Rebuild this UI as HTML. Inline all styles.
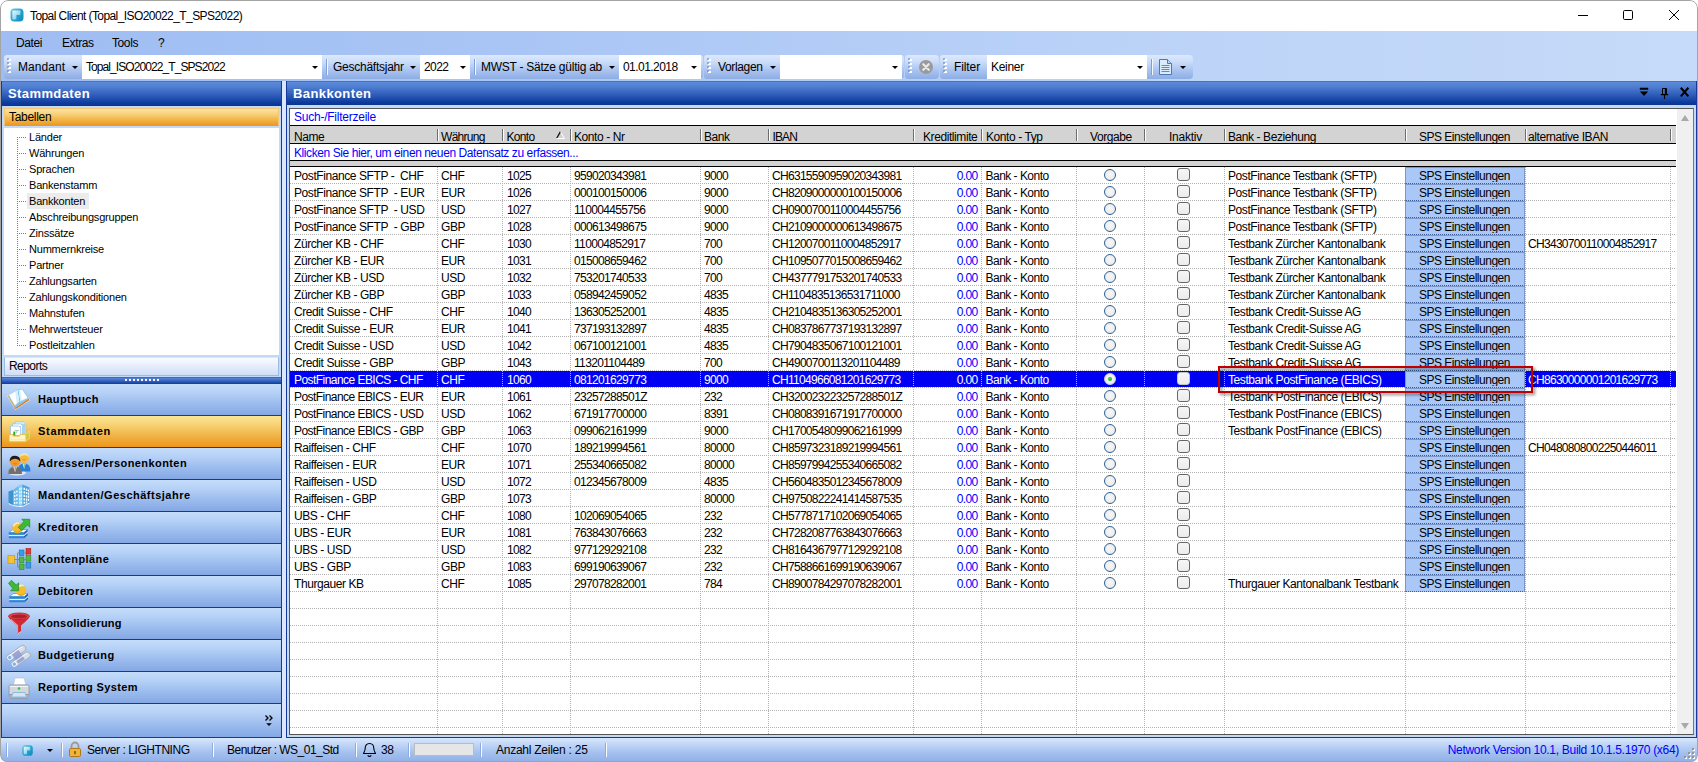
<!DOCTYPE html>
<html><head><meta charset="utf-8"><title>Topal Client</title>
<style>
*{box-sizing:border-box;margin:0;padding:0}
html,body{width:1698px;height:762px;overflow:hidden;background:#fff}
body{font-family:"Liberation Sans",sans-serif;font-size:12px;color:#000;position:relative}
.abs,#win *{position:absolute}
#win{position:absolute;left:0;top:0;width:1698px;height:762px;border-radius:8px 8px 7px 7px;overflow:hidden;background:#fff}
#frame{left:0;top:0;width:1698px;height:762px;border:1px solid #a4a4a4;border-radius:8px 8px 7px 7px;z-index:50;pointer-events:none}
/* title */
#title{left:1px;top:1px;width:1696px;height:30px;background:#fff}
#ttext{left:29px;top:7px;font-size:12px;letter-spacing:-0.58px;white-space:nowrap;line-height:16px}
/* menu + toolbar bg */
#mbar{left:1px;top:31px;width:1696px;height:50px;background:linear-gradient(90deg,#9fbdf3 0%,#a9c5f5 30%,#bdd4f8 70%,#c6daf9 100%)}
.mi{top:4px;font-size:12px;line-height:16px;letter-spacing:-0.4px;white-space:nowrap}
/* toolstrips */
.ts{top:24px;height:24px;border-radius:3px 4px 4px 3px;background:linear-gradient(180deg,#dde9fc 0%,#c9dcf9 30%,#a9c3f0 65%,#8eade3 100%)}
.grip{top:4px;left:4px;width:3px;height:15px;background:repeating-linear-gradient(180deg,#fff 0,#fff 2px,transparent 2px,transparent 4px)}
.grip:after{content:"";position:absolute;left:-1px;top:-1px;width:2px;height:15px;background:repeating-linear-gradient(180deg,#5a7fc4 0,#5a7fc4 2px,transparent 2px,transparent 4px);opacity:.55}
.tl{top:4px;font-size:12px;line-height:16px;letter-spacing:-0.25px;white-space:nowrap;color:#000}
.cb{top:0;height:24px;background:#fff}
.cb span{left:4px;top:4px;font-size:12px;line-height:16px;letter-spacing:-0.55px;white-space:nowrap}
.arr{width:0;height:0;border-left:3px solid transparent;border-right:3px solid transparent;border-top:3px solid #000;top:11px}
.tsep{top:4px;width:2px;height:16px;border-left:1px solid #7f9fd6;border-right:1px solid #f4f8fe}
/* panels */
.phead{height:25px;background:linear-gradient(180deg,#2f58b5 0,#5d8bdb 1px,#4f7dd0 25%,#2c5ab8 60%,#0e3c9c 88%,#0a3391 100%)}
.phead b{left:6px;top:5px;font-size:13px;line-height:16px;color:#fff;font-weight:bold;white-space:nowrap;letter-spacing:0.4px}
#lp{left:1px;top:81px;width:281px;height:657px;background:#c3d9f8;border-left:1px solid #16389a;border-right:1px solid #16389a;border-bottom:1px solid #16389a}
#tab{left:2px;top:27px;width:275px;height:18px;background:linear-gradient(180deg,#fbe3a3 0%,#f8cf74 35%,#f2ae3c 75%,#ec9a23 100%);border:1px solid #f5c676;border-bottom-color:#e99a2e}
#tab span,#rep span{left:4px;top:1px;font-size:12px;letter-spacing:-0.3px;line-height:15px;white-space:nowrap}
#tree{left:2px;top:47px;width:275px;height:227px;background:#fff}
.ti{left:0;height:16px;width:275px}
.ti span{left:23px;top:0;height:16px;padding:0 2px;font-size:11px;line-height:16px;letter-spacing:-0.2px;white-space:nowrap}
.ti.cur span{background:#ececec;padding-right:4px}
.ti:before{content:"";position:absolute;left:13px;top:8px;width:9px;height:1px;background:repeating-linear-gradient(90deg,#808080 0,#808080 1px,transparent 1px,transparent 2px)}
#tvl{left:13px;top:9px;width:1px;height:208px;background:repeating-linear-gradient(180deg,#808080 0,#808080 1px,transparent 1px,transparent 2px)}
#rep{left:2px;top:276px;width:275px;height:19px;background:linear-gradient(180deg,#fafcff 0%,#e6eefb 45%,#cfdef6 100%);border:1px solid #9db9e8;border-top-color:#d8e5fa}
#split{left:0;top:296px;width:279px;height:7px;background:linear-gradient(180deg,#2d59b6 0%,#5582d4 20%,#3a68c2 50%,#0e3b9b 100%)}
#split i{left:123px;top:2px;width:36px;height:2px;background:repeating-linear-gradient(90deg,#fff 0,#fff 2px,transparent 2px,transparent 4px);opacity:.95}
.nb{left:0;width:279px;height:32px;border-bottom:1px solid #16389a;background:linear-gradient(180deg,#c4dcfb 0%,#b5d0f6 30%,#9abbee 65%,#84a8e5 100%)}
.nb.act{background:linear-gradient(180deg,#fbe596 0%,#f7d172 30%,#f0ae3e 70%,#ee961b 100%)}
.nb span{left:36px;top:8px;font-size:11px;font-weight:bold;line-height:15px;letter-spacing:0.38px;white-space:nowrap}
.nb .ni{left:4px;top:3px}
#nbot{left:0;top:623px;width:279px;height:33px;background:linear-gradient(180deg,#c4dcfb 0%,#b5d0f6 30%,#9abbee 65%,#84a8e5 100%)}
#rp{left:286px;top:81px;width:1411px;height:657px;background:#c3d9f8;border-left:1px solid #16389a;border-right:1px solid #16389a;border-bottom:1px solid #16389a}
/* grid */
#grid{left:289px;top:108px;width:1405px;height:627px;background:#fff;border:1px solid #555;border-right-color:#777;overflow:hidden}
#g{left:0;top:0;width:1403px;height:625px}
.bl{left:0;width:1386px;height:1px;background:#000}
.gt{left:4px;font-size:12px;letter-spacing:-0.42px;line-height:16px;white-space:nowrap}
.blue{color:#0000ff}
#hdr{left:0;top:17px;width:1386px;height:17px;background:#d3d3d3}
.hs{top:20px;width:2px;height:12px;border-left:1px solid #6d6d6d;border-right:1px solid #fff}
.ht{top:3px;font-size:12px;letter-spacing:-0.42px;line-height:16px;white-space:nowrap}
#gray2{left:0;top:52px;width:1386px;height:5px;background:#d3d3d3}
.row{left:0;width:1386px;height:17px;background:linear-gradient(90deg,#b2b2b2 50%,transparent 50%) left bottom/2px 1px repeat-x}
.row .c{top:1px;font-size:12px;line-height:16px;letter-spacing:-0.42px;white-space:nowrap;height:16px}
.row .c.n{letter-spacing:-0.66px}
.row .c.i{letter-spacing:-0.70px}
.row .c.b{color:#0000ff}
.row.sel{background:linear-gradient(90deg,#b2b2b2 50%,#fff 50%) left bottom/2px 1px repeat-x,linear-gradient(#0000f5,#0000f5) left top/100% 16px no-repeat}
.row.sel .chk{border-color:#c4c4c4}
.row.sel .c{color:#fff}
.vl{z-index:1;top:58px;width:1px;height:567px;background:repeating-linear-gradient(180deg,#b2b2b2 0,#b2b2b2 1px,transparent 1px,transparent 2px)}
.rad{left:814px;top:2px;width:12px;height:12px;border-radius:50%;border:1.3px solid #2d6195;background:radial-gradient(circle at 50% 45%,#f7f7f7 0%,#efefef 55%,#e2e2e2 100%)}
.row.sel .rad{border-color:#c9d3e6}
.rad.on:after{content:"";position:absolute;left:2.7px;top:2.7px;width:4.4px;height:4.4px;border-radius:50%;background:radial-gradient(circle at 45% 40%,#4fd04a,#1f9a22)}
.chk{left:887px;top:1px;width:13px;height:13px;border-radius:3px;border:1px solid #666;background:linear-gradient(180deg,#f6f6f6,#ececec)}
.sps{left:1115px;top:0;width:120px;height:17px;background:#aac8f7;border:1px solid #7d97c9;border-bottom:1px dotted #3d5c96;overflow:hidden;z-index:3}
.sps span{left:13px;top:0px;font-size:12px;line-height:16px;height:14.4px;overflow:hidden;letter-spacing:-0.5px;white-space:nowrap}
.row.sel .sps span{color:#000}
#vsb{left:1387px;top:0;width:16px;height:625px;background:#f0f0f0}
.sa{left:4px;width:0;height:0;border-left:4px solid transparent;border-right:4px solid transparent}
/* red box */
#red{left:1218px;top:366px;width:315px;height:27px;border:2px solid #c00000;z-index:20;background:transparent;filter:drop-shadow(2px 2px 1.5px rgba(0,0,0,.5))}
/* status */
#sb{left:1px;top:738px;width:1696px;height:24px;background:linear-gradient(180deg,#d9e7fb 0%,#c2d7f7 25%,#a5c1ef 60%,#8fafe5 100%)}
.st{top:4px;font-size:12px;line-height:16px;letter-spacing:-0.45px;white-space:nowrap}
.ss{top:5px;width:2px;height:14px;border-left:1px solid #8eabde;border-right:1px solid #fafcff}
</style></head><body>
<div id="win">
 <div id="title">
  <svg style="left:8px;top:6px" width="16" height="16" viewBox="0 0 16 16"><defs><linearGradient id="tg" x1="0" y1="0" x2="1" y2="1"><stop offset="0" stop-color="#6fcbe6"/><stop offset=".5" stop-color="#23a3cf"/><stop offset="1" stop-color="#118bbd"/></linearGradient><linearGradient id="th" x1="0" y1="0" x2="1" y2="1"><stop offset="0" stop-color="#fff" stop-opacity=".9"/><stop offset=".55" stop-color="#d8f2fb" stop-opacity=".7"/><stop offset="1" stop-color="#9adcf1" stop-opacity=".35"/></linearGradient><filter id="tb" x="-20%" y="-20%" width="140%" height="140%"><feGaussianBlur stdDeviation=".55"/></filter></defs><rect x="1.500" y="1.500" width="13" height="13" rx="3.800" fill="url(#tg)"/><path d="M3.400 3.400h8v4.600H7.400v4.600H3.400z" fill="url(#th)" filter="url(#tb)"/></svg>
  <div id="ttext">Topal Client (Topal_ISO20022_T_SPS2022)</div>
  <svg style="left:1576px;top:8px" width="106" height="16" viewBox="0 0 106 16" fill="none" stroke="#000" stroke-width="1"><path d="M1 6.5h10"/><rect x="46.5" y="1.5" width="9" height="9" rx="1.2"/><path d="M92 1l10 10M102 1l-10 10"/></svg>
 </div>
 <div id="mbar">
  <div class="mi" style="left:15px">Datei</div><div class="mi" style="left:61px">Extras</div><div class="mi" style="left:111px">Tools</div><div class="mi" style="left:157px">?</div>
  <!-- strip 1 -->
  <div class="ts" style="left:3px;width:699px">
   <div class="grip"></div>
   <div class="tl" style="left:14px;letter-spacing:0.05px">Mandant</div><i class="arr" style="left:68px"></i>
   <div class="cb" style="left:78px;width:240px"><span style="letter-spacing:-0.92px">Topal_ISO20022_T_SPS2022</span><i class="arr" style="left:230px"></i></div>
   <i class="tsep" style="left:322px"></i>
   <div class="tl" style="left:329px">Geschäftsjahr</div><i class="arr" style="left:406px"></i>
   <div class="cb" style="left:416px;width:50px"><span>2022</span><i class="arr" style="left:40px"></i></div>
   <i class="tsep" style="left:470px"></i>
   <div class="tl" style="left:477px">MWST - Sätze gültig ab</div><i class="arr" style="left:605px"></i>
   <div class="cb" style="left:615px;width:82px"><span>01.01.2018</span><i class="arr" style="left:72px"></i></div>
  </div>
  <!-- strip 2 -->
  <div class="ts" style="left:703px;width:200px">
   <div class="grip"></div>
   <div class="tl" style="left:14px;letter-spacing:-0.35px">Vorlagen</div><i class="arr" style="left:66px"></i>
   <div class="cb" style="left:76px;width:122px"><i class="arr" style="left:112px"></i></div>
  </div>
  <!-- strip 3 -->
  <div class="ts" style="left:904px;width:34px">
   <div class="grip"></div>
   <svg style="left:13px;top:4px" width="16" height="16" viewBox="0 0 16 16"><circle cx="8" cy="8" r="7" fill="#9a9a9a"/><path d="M5.3 5.3l5.4 5.4M10.7 5.3l-5.4 5.4" stroke="#e9e9e9" stroke-width="2.3" stroke-linecap="round"/></svg>
  </div>
  <!-- strip 4 -->
  <div class="ts" style="left:939px;width:253px">
   <div class="grip"></div>
   <div class="tl" style="left:14px;letter-spacing:-0.1px">Filter</div>
   <div class="cb" style="left:47px;width:160px"><span style="letter-spacing:-0.3px">Keiner</span><i class="arr" style="left:150px"></i></div>
   <i class="tsep" style="left:211px"></i>
   <svg style="left:218px;top:3px" width="16" height="18" viewBox="0 0 16 18"><path d="M1.5 1.5h8l4 4v11h-12z" fill="#dcebfb" stroke="#4a78b8"/><path d="M9.5 1.5v4h4" fill="#b9d3f2" stroke="#4a78b8"/><path d="M3.5 7.5h8M3.5 9.5h8M3.5 11.5h8M3.5 13.5h8" stroke="#5b8cc9"/></svg>
   <i class="arr" style="left:240px"></i>
  </div>
 </div>

 <!-- left panel -->
 <div id="lp">
  <div class="phead" style="left:0;top:0;width:279px"><b>Stammdaten</b></div>
  <div id="tab"><span>Tabellen</span></div>
  <div id="tree"><div id="tvl"></div>
<div class="ti" style="top:1px"><span>Länder</span></div>
<div class="ti" style="top:17px"><span>Währungen</span></div>
<div class="ti" style="top:33px"><span>Sprachen</span></div>
<div class="ti" style="top:49px"><span>Bankenstamm</span></div>
<div class="ti cur" style="top:65px"><span>Bankkonten</span></div>
<div class="ti" style="top:81px"><span>Abschreibungsgruppen</span></div>
<div class="ti" style="top:97px"><span>Zinssätze</span></div>
<div class="ti" style="top:113px"><span>Nummernkreise</span></div>
<div class="ti" style="top:129px"><span>Partner</span></div>
<div class="ti" style="top:145px"><span>Zahlungsarten</span></div>
<div class="ti" style="top:161px"><span>Zahlungskonditionen</span></div>
<div class="ti" style="top:177px"><span>Mahnstufen</span></div>
<div class="ti" style="top:193px"><span>Mehrwertsteuer</span></div>
<div class="ti" style="top:209px"><span>Postleitzahlen</span></div>
  </div>
  <div id="rep"><span style="letter-spacing:-0.55px">Reports</span></div>
  <div id="split"><i></i></div>
<div class="nb" style="top:303px"><svg class="ni" width="26" height="26" viewBox="0 0 26 26"><path d="M1.300 9.200L9.400 23L23.800 13.200L22.800 10.500L9.600 19.800L2.200 7.600z" fill="#fff" opacity=".75"/><path d="M1.900 9.300L9.400 22.300L23.200 13L22.700 11.200L9.600 20.200L2.300 8.200z" fill="#e2962c"/><path d="M9.400 22.300L23.200 13L22.900 12.200L9.500 21.300z" fill="#c9452a" opacity=".55"/><path d="M2.300 7.900L11.800 2.800L16.700 1.900L22.600 11.300L9.500 20.600z" fill="#79c6ec"/><path d="M2.900 7.900L11.500 3.300L13.200 14.400L8.900 18.600z" fill="#fff"/><path d="M12.700 3.200L16.300 2.600L21.700 11L14.400 14.400z" fill="#fff"/><path d="M11.500 3.300L13.200 14.400L10.800 16.600L9.200 5z" fill="#d4ecf9" opacity=".9"/><path d="M12.700 3.200L14.400 14.400L16 13.600L14.200 3z" fill="#d4ecf9" opacity=".9"/><path d="M8.900 18.600L13.200 14.400L14.400 14.400L21.700 11" fill="none" stroke="#a9dbf3" stroke-width=".8"/></svg><span style="letter-spacing:0.38px">Hauptbuch</span></div>
<div class="nb act" style="top:335px"><svg class="ni" width="26" height="26" viewBox="0 0 26 26"><path d="M9 2.800h8.200l2.600 2.200v10.500H9z" fill="#eaf5fd" stroke="#86c0e8" stroke-width=".7"/><path d="M16 4.500v10.500M18 5v10" stroke="#74bbea" stroke-width="1.100"/><path d="M6.600 4.900h8l2 1.800v9H6.600z" fill="#fff" stroke="#86c0e8" stroke-width=".7"/><path d="M14.300 7v8.500" stroke="#9bd0f0" stroke-width="1"/><path d="M4.500 7h8.400l1.800 1.800v7.700H4.500z" fill="#fff" stroke="#86c0e8" stroke-width=".7"/><path d="M8.500 11.500h4.500M10.700 11.500v3" stroke="#9db7b0" stroke-width=".8" fill="none"/><rect x="7.300" y="12.600" width="2" height="4" fill="#2da52f"/><path d="M19.900 15.400L23.200 12.100v7.200L19.600 23z" fill="#d3c535" stroke="#fff" stroke-width=".4"/><path d="M3.100 15.400h3.400l.9 1.700h6l.9-1.700h5.600v7.400H3.100z" fill="#fdf5c8" stroke="#e6bd30" stroke-width=".9"/><path d="M3.600 20.800h15.800" stroke="#fbe9a0" stroke-width="1.200"/></svg><span style="letter-spacing:0.7px">Stammdaten</span></div>
<div class="nb" style="top:367px"><svg class="ni" width="26" height="26" viewBox="0 0 26 26"><ellipse cx="11" cy="21.800" rx="9" ry="2.800" fill="#fff" opacity=".7"/><circle cx="18" cy="7.300" r="5" fill="#f6b93c"/><path d="M13.200 6.800q.2-5 4.900-4.900q4.800.2 4.800 4.800q-1.500-2.600-4.700-2.400q-3.300.1-5 2.500z" fill="#efe3b0"/><path d="M16.500 8.600q1.500 1.300 3.200 0" fill="none" stroke="#c9771a" stroke-width=".6"/><path d="M11.800 20.500q0-8 6.400-8t6.300 8z" fill="#2b7fd2"/><path d="M16.600 12.800l1.600 5l1.500-5z" fill="#eef6fc"/><path d="M17.700 13.300l.5 4l.5-4z" fill="#23a35a"/><circle cx="9" cy="10.800" r="5" fill="#f39a2a"/><path d="M3.700 10.500q-.3-5.700 5.300-5.700q5.500.1 5.300 5.700q-1.800-3-5.300-2.800q-3.500-.1-5.300 2.800z" fill="#1a1a1a"/><path d="M7.500 12.500q1.500 1.200 3.100 0" fill="none" stroke="#b85f10" stroke-width=".6"/><path d="M2 23q0-7.500 7-7.500t7 7.500z" fill="#707070"/><path d="M2 23q0-7.500 7-7.500" fill="none" stroke="#a4a4a4" stroke-width=".8"/><path d="M7.300 15.700l1.800 5.500l1.700-5.500z" fill="#f4f4f4"/><path d="M8.600 16.200l.5 4.600l.6-4.600z" fill="#d81e1e"/></svg><span style="letter-spacing:0.42px">Adressen/Personenkonten</span></div>
<div class="nb" style="top:399px"><svg class="ni" width="26" height="26" viewBox="0 0 26 26"><path d="M2.500 8.500l4.500-1.500v15.500l-4.500-2z" fill="#3c94d0"/><path d="M7 7l5.500-4v20.500l-5.500-1z" fill="#6cb9e8"/><path d="M12.500 3l4-1.500l7 3v15.500l-7 3.500h-4z" fill="#46a3df"/><path d="M12.500 3l4-1.500v22l-4 0z" fill="#8ed0f3"/><g fill="#f2faff"><path d="M13.300 5h1v2.200h-1zM14.800 4.500h1v2.200h-1zM13.300 8.400h1v2.200h-1zM14.800 8h1v2.200h-1zM13.300 11.800h1v2.200h-1zM14.800 11.500h1v2.200h-1zM13.300 15.200h1v2.200h-1zM14.800 15h1v2.200h-1zM13.300 18.600h1v2.200h-1zM14.800 18.500h1v2.200h-1z"/><path d="M17.500 4.800h1.500v2.200h-1.500zM19.800 5.600h1.400v2.200h-1.400zM21.800 6.400h1.200v2.200h-1.200zM17.500 8.300h1.500v2.200h-1.500zM19.800 8.900h1.400v2.200h-1.400zM21.800 9.500h1.200v2.200h-1.200zM17.500 11.800h1.500v2.200h-1.500zM19.800 12.200h1.400v2.200h-1.400zM21.800 12.600h1.200v2.200h-1.200zM17.500 15.300h1.500v2.200h-1.500zM19.800 15.500h1.400v2.200h-1.400zM21.800 15.700h1.200v2.200h-1.200zM17.500 18.800h1.500v2h-1.500zM19.800 18.500h1.400v2h-1.400z"/><path d="M8 8.500h1.400v2H8zM10.200 7.500h1.400v2h-1.400zM8 12h1.400v2H8zM10.200 11.300h1.400v2h-1.400zM8 15.500h1.400v2H8zM10.200 15h1.400v2h-1.400zM8 19h1.400v2H8zM10.200 18.700h1.400v2h-1.400z"/></g><path d="M2.500 20.500l4.500 2l5.500 1h4l7-3.500" fill="none" stroke="#fff" stroke-width="1" opacity=".8"/></svg><span style="letter-spacing:0.5px">Mandanten/Geschäftsjahre</span></div>
<div class="nb" style="top:431px"><svg class="ni" width="26" height="26" viewBox="0 0 26 26"><path d="M2.800 17.500l4.200-3h14.500l-3.500 3z" fill="#fff" stroke="#3f92d6" stroke-width=".7"/><path d="M2.800 17.500h15.200v2.200H2.800z" fill="#2a87d6"/><path d="M18 17.500l3.500-3v2.200l-3.500 3z" fill="#1b69b4"/><path d="M2.800 20.200h15.200l3.500-3v.800l-3.500 3H2.800z" fill="#fff"/><path d="M2.800 21.200h15.200v2H2.800z" fill="#2a87d6"/><path d="M18 21.200l3.500-3v2l-3.500 3z" fill="#1b69b4"/><circle cx="11.500" cy="13" r="5.300" fill="#f5bd2e"/><path d="M7.600 11.200a4.800 4.800 0 0 1 5.500-3" fill="none" stroke="#fdeeb0" stroke-width="1.600"/><path d="M8.500 16a5 5 0 0 0 7-1" fill="none" stroke="#dc9a14" stroke-width="1"/><path d="M12.300 12.300l5.700-5.700l-2.300-2.300h8v8l-2.300-2.300l-5.700 5.700z" fill="#3db838" stroke="#1e8a22" stroke-width=".7"/></svg><span style="letter-spacing:0.5px">Kreditoren</span></div>
<div class="nb" style="top:463px"><svg class="ni" width="26" height="26" viewBox="0 0 26 26"><rect x="2" y="8.500" width="6.500" height="8" fill="#f4c430" stroke="#c99a12" stroke-width=".7"/><path d="M8.500 12.500h3M11.500 6v14M11.500 6h2M11.500 12.500h2M11.500 20h2M18.500 6h2v12h-2M18.500 12.500h2" fill="none" stroke="#7a8aa8" stroke-width="1"/><rect x="13.200" y="3" width="4.800" height="5.600" fill="#3b9be3" stroke="#1f70b8" stroke-width=".6"/><rect x="13.200" y="10" width="4.800" height="5.600" fill="#52b947" stroke="#2c8a26" stroke-width=".6"/><rect x="13.200" y="17" width="4.800" height="5.600" fill="#52b947" stroke="#2c8a26" stroke-width=".6"/><rect x="20" y="1.500" width="4.800" height="5.600" fill="#e23a2e" stroke="#ab1f17" stroke-width=".6"/><rect x="20" y="8.500" width="4.800" height="5.600" fill="#52b947" stroke="#2c8a26" stroke-width=".6"/><rect x="20" y="15.500" width="4.800" height="5.600" fill="#3b9be3" stroke="#1f70b8" stroke-width=".6"/></svg><span style="letter-spacing:0.42px">Kontenpläne</span></div>
<div class="nb" style="top:495px"><svg class="ni" width="26" height="26" viewBox="0 0 26 26"><path d="M3.300 17.500l4.200-3h14.500l-3.500 3z" fill="#fff" stroke="#3f92d6" stroke-width=".7"/><path d="M3.300 17.500h15.200v2.200H3.300z" fill="#2a87d6"/><path d="M18.500 17.500l3.500-3v2.200l-3.500 3z" fill="#1b69b4"/><path d="M3.300 20.200h15.200l3.500-3v.800l-3.500 3H3.300z" fill="#fff"/><path d="M3.300 21.200h15.200v2H3.300z" fill="#2a87d6"/><path d="M18.500 21.200l3.500-3v2l-3.500 3z" fill="#1b69b4"/><circle cx="15" cy="11.500" r="5.300" fill="#f5bd2e"/><path d="M12 8.500a4.800 4.800 0 0 1 5.500-1.800" fill="none" stroke="#fdeeb0" stroke-width="1.600"/><path d="M11.500 14.500a5 5 0 0 0 7.500 0" fill="none" stroke="#dc9a14" stroke-width="1"/><path d="M2.500 4.300l3-3l4.800 4.800l2.300-2.300v8H4.600l2.300-2.300z" fill="#3db838" stroke="#1e8a22" stroke-width=".7"/></svg><span style="letter-spacing:0.45px">Debitoren</span></div>
<div class="nb" style="top:527px"><svg class="ni" width="26" height="26" viewBox="0 0 26 26"><path d="M2.500 5.500q1 3 8.500 9v8.800l4-2.800v-6q7.500-6 8.500-9q-10.500 4.500-21 0z" fill="#d42a36"/><ellipse cx="13" cy="5.300" rx="10.500" ry="3.300" fill="#e2474e" stroke="#b41e28" stroke-width=".8"/><ellipse cx="13" cy="5.400" rx="8" ry="2" fill="#ad1f2a"/><path d="M5 8.500q2.500 2.800 6.500 6v7.500" fill="none" stroke="#f39498" stroke-width="1.200"/><path d="M11 23.300l4-2.800" stroke="#fff" stroke-width=".8" opacity=".7"/></svg><span style="letter-spacing:0.22px">Konsolidierung</span></div>
<div class="nb" style="top:559px"><svg class="ni" width="26" height="26" viewBox="0 0 26 26"><g transform="rotate(-35 13 13)"><rect x="1.500" y="6" width="22" height="6" rx="3" fill="#d9dde6" stroke="#9aa3b5" stroke-width=".7"/><rect x="1.500" y="14" width="22" height="6" rx="3" fill="#d9dde6" stroke="#9aa3b5" stroke-width=".7"/><rect x="8" y="7" width="8" height="12" fill="#8f9bd0" opacity=".85"/><circle cx="4.500" cy="9" r="2.200" fill="#7fb4e8" stroke="#fff" stroke-width=".8"/><circle cx="4.500" cy="17" r="2.200" fill="#7fb4e8" stroke="#fff" stroke-width=".8"/><path d="M6 7.200h15M6 15.200h15" stroke="#fff" stroke-width="1" opacity=".8"/></g></svg><span style="letter-spacing:0.42px">Budgetierung</span></div>
<div class="nb" style="top:591px"><svg class="ni" width="26" height="26" viewBox="0 0 26 26"><path d="M7.500 10l1.500-7h9l2 7z" fill="#fff" stroke="#b9c4d4" stroke-width=".7"/><path d="M3 11.500q0-1.500 1.500-1.500h17q1.500 0 1.500 1.500v8h-20z" fill="#d4d7dc" stroke="#8e949e" stroke-width=".8"/><path d="M3 19.500h20l-1.500 4h-17z" fill="#b4b8c0" stroke="#8e949e" stroke-width=".7"/><path d="M7 17.500h12l1.500 4.500h-15z" fill="#cfe6f8" stroke="#7aaad2" stroke-width=".7"/><circle cx="13" cy="13.500" r="1.300" fill="#35c43c"/><path d="M4 11.500h18" stroke="#f4f5f7" stroke-width="1"/>
</svg><span style="letter-spacing:0.36px">Reporting System</span></div>
  <div id="nbot"><svg style="left:262px;top:10px" width="10" height="18" viewBox="0 0 10 18"><path d="M1.5 1.500l2.500 2.500l-2.500 2.500M5.500 1.500l2.500 2.500l-2.500 2.500" fill="none" stroke="#000" stroke-width="1.35"/><path d="M2.200 9.200h5.600l-2.800 2.800z" fill="#000"/></svg></div>
 </div>

 <div style="left:282px;top:81px;width:4px;height:657px;background:#d9e6fb"></div>
 <!-- right panel -->
 <div id="rp">
  <div class="phead" style="left:0;top:0;width:1409px;height:24px"><b>Bankkonten</b>
   <svg style="left:1350px;top:5px" width="56" height="16" viewBox="0 0 56 16"><path d="M2.800 1.800h8.400v1.900H2.800zM2.800 5.500h8.400l-4.200 4.600z" fill="#000"/><path d="M25.500 2.500h4v6h-4z" fill="none" stroke="#000" stroke-width="1"/><path d="M28.700 2.500v6" stroke="#000" stroke-width="1.600"/><path d="M23.800 8.600h7.400" stroke="#000" stroke-width="1.200"/><path d="M27.500 8.600v4.300" stroke="#000" stroke-width="1.100"/><path d="M43.800 1.800l7.600 8.600M51.400 1.800l-7.600 8.600" stroke="#000" stroke-width="2.100"/></svg>
  </div>
 </div>
 <div id="grid"><div id="g">
  <div class="gt blue" style="top:0;letter-spacing:-0.24px">Such-/Filterzeile</div>
  <div class="bl" style="top:16px"></div>
  <div id="hdr">
   <div class="ht" style="left:4px">Name</div><div class="ht" style="left:151px;letter-spacing:-0.7px">Währung</div><div class="ht" style="left:216.500px;letter-spacing:-0.7px">Konto</div>
   <svg style="left:266px;top:5px" width="10" height="8" viewBox="0 0 10 8"><path d="M0.700 7.300L4.500 0.600" stroke="#111" stroke-width="1.300" fill="none"/><path d="M4.500 0.500L8.500 7.500H0.500" stroke="#fff" fill="none"/></svg>
   <div class="ht" style="left:284px">Konto - Nr</div><div class="ht" style="left:414px">Bank</div><div class="ht" style="left:482.500px;letter-spacing:-0.9px">IBAN</div>
   <div class="ht" style="left:633px">Kreditlimite</div><div class="ht" style="left:696px">Konto - Typ</div><div class="ht" style="left:800px">Vorgabe</div>
   <div class="ht" style="left:879px;letter-spacing:-0.25px">Inaktiv</div><div class="ht" style="left:938px">Bank - Beziehung</div><div class="ht" style="left:1129px;letter-spacing:-0.5px">SPS Einstellungen</div><div class="ht" style="left:1238px">alternative IBAN</div>
  </div>
<div class="hs" style="left:147px"></div>
<div class="hs" style="left:212px"></div>
<div class="hs" style="left:280px"></div>
<div class="hs" style="left:410px"></div>
<div class="hs" style="left:478px"></div>
<div class="hs" style="left:623px"></div>
<div class="hs" style="left:691px"></div>
<div class="hs" style="left:786px"></div>
<div class="hs" style="left:854px"></div>
<div class="hs" style="left:934px"></div>
<div class="hs" style="left:1115px"></div>
<div class="hs" style="left:1235px"></div>
<div class="hs" style="left:1380px"></div>
  <div class="bl" style="top:34px"></div>
  <div class="gt blue" style="top:36px;letter-spacing:-0.41px">Klicken Sie hier, um einen neuen Datensatz zu erfassen...</div>
  <div class="bl" style="top:51px"></div>
  <div id="gray2"></div>
  <div class="bl" style="top:57px"></div>
  <div id="rows" style="left:0;top:0;width:1386px;height:625px">
<div class="row" style="top:58px"><span class="c" style="left:4px">PostFinance SFTP -&nbsp; CHF</span><span class="c" style="left:151px">CHF</span><span class="c n" style="left:217px">1025</span><span class="c n" style="left:284px">959020343981</span><span class="c n" style="left:414px">9000</span><span class="c i" style="left:482px">CH6315590959020343981</span><span class="c n b" style="right:698.5px">0.00</span><span class="c" style="left:695.5px;letter-spacing:-0.52px">Bank - Konto</span><i class="rad"></i><i class="chk"></i><span class="c" style="left:938px">PostFinance Testbank (SFTP)</span><span class="sps"><span>SPS Einstellungen</span></span><span class="c i" style="left:1238px"></span></div>
<div class="row" style="top:75px"><span class="c" style="left:4px">PostFinance SFTP&nbsp; - EUR</span><span class="c" style="left:151px">EUR</span><span class="c n" style="left:217px">1026</span><span class="c n" style="left:284px">000100150006</span><span class="c n" style="left:414px">9000</span><span class="c i" style="left:482px">CH8209000000100150006</span><span class="c n b" style="right:698.5px">0.00</span><span class="c" style="left:695.5px;letter-spacing:-0.52px">Bank - Konto</span><i class="rad"></i><i class="chk"></i><span class="c" style="left:938px">PostFinance Testbank (SFTP)</span><span class="sps"><span>SPS Einstellungen</span></span><span class="c i" style="left:1238px"></span></div>
<div class="row" style="top:92px"><span class="c" style="left:4px">PostFinance SFTP&nbsp; - USD</span><span class="c" style="left:151px">USD</span><span class="c n" style="left:217px">1027</span><span class="c n" style="left:284px">110004455756</span><span class="c n" style="left:414px">9000</span><span class="c i" style="left:482px">CH0900700110004455756</span><span class="c n b" style="right:698.5px">0.00</span><span class="c" style="left:695.5px;letter-spacing:-0.52px">Bank - Konto</span><i class="rad"></i><i class="chk"></i><span class="c" style="left:938px">PostFinance Testbank (SFTP)</span><span class="sps"><span>SPS Einstellungen</span></span><span class="c i" style="left:1238px"></span></div>
<div class="row" style="top:109px"><span class="c" style="left:4px">PostFinance SFTP&nbsp; - GBP</span><span class="c" style="left:151px">GBP</span><span class="c n" style="left:217px">1028</span><span class="c n" style="left:284px">000613498675</span><span class="c n" style="left:414px">9000</span><span class="c i" style="left:482px">CH2109000000613498675</span><span class="c n b" style="right:698.5px">0.00</span><span class="c" style="left:695.5px;letter-spacing:-0.52px">Bank - Konto</span><i class="rad"></i><i class="chk"></i><span class="c" style="left:938px">PostFinance Testbank (SFTP)</span><span class="sps"><span>SPS Einstellungen</span></span><span class="c i" style="left:1238px"></span></div>
<div class="row" style="top:126px"><span class="c" style="left:4px">Zürcher KB - CHF</span><span class="c" style="left:151px">CHF</span><span class="c n" style="left:217px">1030</span><span class="c n" style="left:284px">110004852917</span><span class="c n" style="left:414px">700</span><span class="c i" style="left:482px">CH1200700110004852917</span><span class="c n b" style="right:698.5px">0.00</span><span class="c" style="left:695.5px;letter-spacing:-0.52px">Bank - Konto</span><i class="rad"></i><i class="chk"></i><span class="c" style="left:938px">Testbank Zürcher Kantonalbank</span><span class="sps"><span>SPS Einstellungen</span></span><span class="c i" style="left:1238px">CH3430700110004852917</span></div>
<div class="row" style="top:143px"><span class="c" style="left:4px">Zürcher KB - EUR</span><span class="c" style="left:151px">EUR</span><span class="c n" style="left:217px">1031</span><span class="c n" style="left:284px">015008659462</span><span class="c n" style="left:414px">700</span><span class="c i" style="left:482px">CH1095077015008659462</span><span class="c n b" style="right:698.5px">0.00</span><span class="c" style="left:695.5px;letter-spacing:-0.52px">Bank - Konto</span><i class="rad"></i><i class="chk"></i><span class="c" style="left:938px">Testbank Zürcher Kantonalbank</span><span class="sps"><span>SPS Einstellungen</span></span><span class="c i" style="left:1238px"></span></div>
<div class="row" style="top:160px"><span class="c" style="left:4px">Zürcher KB - USD</span><span class="c" style="left:151px">USD</span><span class="c n" style="left:217px">1032</span><span class="c n" style="left:284px">753201740533</span><span class="c n" style="left:414px">700</span><span class="c i" style="left:482px">CH4377791753201740533</span><span class="c n b" style="right:698.5px">0.00</span><span class="c" style="left:695.5px;letter-spacing:-0.52px">Bank - Konto</span><i class="rad"></i><i class="chk"></i><span class="c" style="left:938px">Testbank Zürcher Kantonalbank</span><span class="sps"><span>SPS Einstellungen</span></span><span class="c i" style="left:1238px"></span></div>
<div class="row" style="top:177px"><span class="c" style="left:4px">Zürcher KB - GBP</span><span class="c" style="left:151px">GBP</span><span class="c n" style="left:217px">1033</span><span class="c n" style="left:284px">058942459052</span><span class="c n" style="left:414px">4835</span><span class="c i" style="left:482px">CH1104835136531711000</span><span class="c n b" style="right:698.5px">0.00</span><span class="c" style="left:695.5px;letter-spacing:-0.52px">Bank - Konto</span><i class="rad"></i><i class="chk"></i><span class="c" style="left:938px">Testbank Zürcher Kantonalbank</span><span class="sps"><span>SPS Einstellungen</span></span><span class="c i" style="left:1238px"></span></div>
<div class="row" style="top:194px"><span class="c" style="left:4px">Credit Suisse - CHF</span><span class="c" style="left:151px">CHF</span><span class="c n" style="left:217px">1040</span><span class="c n" style="left:284px">136305252001</span><span class="c n" style="left:414px">4835</span><span class="c i" style="left:482px">CH2104835136305252001</span><span class="c n b" style="right:698.5px">0.00</span><span class="c" style="left:695.5px;letter-spacing:-0.52px">Bank - Konto</span><i class="rad"></i><i class="chk"></i><span class="c" style="left:938px">Testbank Credit-Suisse AG</span><span class="sps"><span>SPS Einstellungen</span></span><span class="c i" style="left:1238px"></span></div>
<div class="row" style="top:211px"><span class="c" style="left:4px">Credit Suisse - EUR</span><span class="c" style="left:151px">EUR</span><span class="c n" style="left:217px">1041</span><span class="c n" style="left:284px">737193132897</span><span class="c n" style="left:414px">4835</span><span class="c i" style="left:482px">CH0837867737193132897</span><span class="c n b" style="right:698.5px">0.00</span><span class="c" style="left:695.5px;letter-spacing:-0.52px">Bank - Konto</span><i class="rad"></i><i class="chk"></i><span class="c" style="left:938px">Testbank Credit-Suisse AG</span><span class="sps"><span>SPS Einstellungen</span></span><span class="c i" style="left:1238px"></span></div>
<div class="row" style="top:228px"><span class="c" style="left:4px">Credit Suisse - USD</span><span class="c" style="left:151px">USD</span><span class="c n" style="left:217px">1042</span><span class="c n" style="left:284px">067100121001</span><span class="c n" style="left:414px">4835</span><span class="c i" style="left:482px">CH7904835067100121001</span><span class="c n b" style="right:698.5px">0.00</span><span class="c" style="left:695.5px;letter-spacing:-0.52px">Bank - Konto</span><i class="rad"></i><i class="chk"></i><span class="c" style="left:938px">Testbank Credit-Suisse AG</span><span class="sps"><span>SPS Einstellungen</span></span><span class="c i" style="left:1238px"></span></div>
<div class="row" style="top:245px"><span class="c" style="left:4px">Credit Suisse - GBP</span><span class="c" style="left:151px">GBP</span><span class="c n" style="left:217px">1043</span><span class="c n" style="left:284px">113201104489</span><span class="c n" style="left:414px">700</span><span class="c i" style="left:482px">CH4900700113201104489</span><span class="c n b" style="right:698.5px">0.00</span><span class="c" style="left:695.5px;letter-spacing:-0.52px">Bank - Konto</span><i class="rad"></i><i class="chk"></i><span class="c" style="left:938px">Testbank Credit-Suisse AG</span><span class="sps"><span>SPS Einstellungen</span></span><span class="c i" style="left:1238px"></span></div>
<div class="row sel" style="top:262px"><span class="c" style="left:4px;letter-spacing:-0.55px">PostFinance EBICS - CHF</span><span class="c" style="left:151px">CHF</span><span class="c n" style="left:217px">1060</span><span class="c n" style="left:284px">081201629773</span><span class="c n" style="left:414px">9000</span><span class="c i" style="left:482px">CH1104966081201629773</span><span class="c n b" style="right:698.5px">0.00</span><span class="c" style="left:695.5px;letter-spacing:-0.52px">Bank - Konto</span><i class="rad on"></i><i class="chk"></i><span class="c" style="left:938px">Testbank PostFinance (EBICS)</span><span class="sps"><span>SPS Einstellungen</span></span><span class="c i" style="left:1238px">CH8630000001201629773</span></div>
<div class="row" style="top:279px"><span class="c" style="left:4px;letter-spacing:-0.55px">PostFinance EBICS - EUR</span><span class="c" style="left:151px">EUR</span><span class="c n" style="left:217px">1061</span><span class="c n" style="left:284px">23257288501Z</span><span class="c n" style="left:414px">232</span><span class="c i" style="left:482px">CH320023223257288501Z</span><span class="c n b" style="right:698.5px">0.00</span><span class="c" style="left:695.5px;letter-spacing:-0.52px">Bank - Konto</span><i class="rad"></i><i class="chk"></i><span class="c" style="left:938px">Testbank PostFinance (EBICS)</span><span class="sps"><span>SPS Einstellungen</span></span><span class="c i" style="left:1238px"></span></div>
<div class="row" style="top:296px"><span class="c" style="left:4px;letter-spacing:-0.55px">PostFinance EBICS - USD</span><span class="c" style="left:151px">USD</span><span class="c n" style="left:217px">1062</span><span class="c n" style="left:284px">671917700000</span><span class="c n" style="left:414px">8391</span><span class="c i" style="left:482px">CH0808391671917700000</span><span class="c n b" style="right:698.5px">0.00</span><span class="c" style="left:695.5px;letter-spacing:-0.52px">Bank - Konto</span><i class="rad"></i><i class="chk"></i><span class="c" style="left:938px">Testbank PostFinance (EBICS)</span><span class="sps"><span>SPS Einstellungen</span></span><span class="c i" style="left:1238px"></span></div>
<div class="row" style="top:313px"><span class="c" style="left:4px;letter-spacing:-0.55px">PostFinance EBICS - GBP</span><span class="c" style="left:151px">GBP</span><span class="c n" style="left:217px">1063</span><span class="c n" style="left:284px">099062161999</span><span class="c n" style="left:414px">9000</span><span class="c i" style="left:482px">CH1700548099062161999</span><span class="c n b" style="right:698.5px">0.00</span><span class="c" style="left:695.5px;letter-spacing:-0.52px">Bank - Konto</span><i class="rad"></i><i class="chk"></i><span class="c" style="left:938px">Testbank PostFinance (EBICS)</span><span class="sps"><span>SPS Einstellungen</span></span><span class="c i" style="left:1238px"></span></div>
<div class="row" style="top:330px"><span class="c" style="left:4px">Raiffeisen - CHF</span><span class="c" style="left:151px">CHF</span><span class="c n" style="left:217px">1070</span><span class="c n" style="left:284px">189219994561</span><span class="c n" style="left:414px">80000</span><span class="c i" style="left:482px">CH8597323189219994561</span><span class="c n b" style="right:698.5px">0.00</span><span class="c" style="left:695.5px;letter-spacing:-0.52px">Bank - Konto</span><i class="rad"></i><i class="chk"></i><span class="c" style="left:938px"></span><span class="sps"><span>SPS Einstellungen</span></span><span class="c i" style="left:1238px">CH0480808002250446011</span></div>
<div class="row" style="top:347px"><span class="c" style="left:4px">Raiffeisen - EUR</span><span class="c" style="left:151px">EUR</span><span class="c n" style="left:217px">1071</span><span class="c n" style="left:284px">255340665082</span><span class="c n" style="left:414px">80000</span><span class="c i" style="left:482px">CH8597994255340665082</span><span class="c n b" style="right:698.5px">0.00</span><span class="c" style="left:695.5px;letter-spacing:-0.52px">Bank - Konto</span><i class="rad"></i><i class="chk"></i><span class="c" style="left:938px"></span><span class="sps"><span>SPS Einstellungen</span></span><span class="c i" style="left:1238px"></span></div>
<div class="row" style="top:364px"><span class="c" style="left:4px">Raiffeisen - USD</span><span class="c" style="left:151px">USD</span><span class="c n" style="left:217px">1072</span><span class="c n" style="left:284px">012345678009</span><span class="c n" style="left:414px">4835</span><span class="c i" style="left:482px">CH5604835012345678009</span><span class="c n b" style="right:698.5px">0.00</span><span class="c" style="left:695.5px;letter-spacing:-0.52px">Bank - Konto</span><i class="rad"></i><i class="chk"></i><span class="c" style="left:938px"></span><span class="sps"><span>SPS Einstellungen</span></span><span class="c i" style="left:1238px"></span></div>
<div class="row" style="top:381px"><span class="c" style="left:4px">Raiffeisen - GBP</span><span class="c" style="left:151px">GBP</span><span class="c n" style="left:217px">1073</span><span class="c n" style="left:284px"></span><span class="c n" style="left:414px">80000</span><span class="c i" style="left:482px">CH9750822241414587535</span><span class="c n b" style="right:698.5px">0.00</span><span class="c" style="left:695.5px;letter-spacing:-0.52px">Bank - Konto</span><i class="rad"></i><i class="chk"></i><span class="c" style="left:938px"></span><span class="sps"><span>SPS Einstellungen</span></span><span class="c i" style="left:1238px"></span></div>
<div class="row" style="top:398px"><span class="c" style="left:4px">UBS - CHF</span><span class="c" style="left:151px">CHF</span><span class="c n" style="left:217px">1080</span><span class="c n" style="left:284px">102069054065</span><span class="c n" style="left:414px">232</span><span class="c i" style="left:482px">CH5778717102069054065</span><span class="c n b" style="right:698.5px">0.00</span><span class="c" style="left:695.5px;letter-spacing:-0.52px">Bank - Konto</span><i class="rad"></i><i class="chk"></i><span class="c" style="left:938px"></span><span class="sps"><span>SPS Einstellungen</span></span><span class="c i" style="left:1238px"></span></div>
<div class="row" style="top:415px"><span class="c" style="left:4px">UBS - EUR</span><span class="c" style="left:151px">EUR</span><span class="c n" style="left:217px">1081</span><span class="c n" style="left:284px">763843076663</span><span class="c n" style="left:414px">232</span><span class="c i" style="left:482px">CH7282087763843076663</span><span class="c n b" style="right:698.5px">0.00</span><span class="c" style="left:695.5px;letter-spacing:-0.52px">Bank - Konto</span><i class="rad"></i><i class="chk"></i><span class="c" style="left:938px"></span><span class="sps"><span>SPS Einstellungen</span></span><span class="c i" style="left:1238px"></span></div>
<div class="row" style="top:432px"><span class="c" style="left:4px">UBS - USD</span><span class="c" style="left:151px">USD</span><span class="c n" style="left:217px">1082</span><span class="c n" style="left:284px">977129292108</span><span class="c n" style="left:414px">232</span><span class="c i" style="left:482px">CH8164367977129292108</span><span class="c n b" style="right:698.5px">0.00</span><span class="c" style="left:695.5px;letter-spacing:-0.52px">Bank - Konto</span><i class="rad"></i><i class="chk"></i><span class="c" style="left:938px"></span><span class="sps"><span>SPS Einstellungen</span></span><span class="c i" style="left:1238px"></span></div>
<div class="row" style="top:449px"><span class="c" style="left:4px">UBS - GBP</span><span class="c" style="left:151px">GBP</span><span class="c n" style="left:217px">1083</span><span class="c n" style="left:284px">699190639067</span><span class="c n" style="left:414px">232</span><span class="c i" style="left:482px">CH7588661699190639067</span><span class="c n b" style="right:698.5px">0.00</span><span class="c" style="left:695.5px;letter-spacing:-0.52px">Bank - Konto</span><i class="rad"></i><i class="chk"></i><span class="c" style="left:938px"></span><span class="sps"><span>SPS Einstellungen</span></span><span class="c i" style="left:1238px"></span></div>
<div class="row" style="top:466px"><span class="c" style="left:4px">Thurgauer KB</span><span class="c" style="left:151px">CHF</span><span class="c n" style="left:217px">1085</span><span class="c n" style="left:284px">297078282001</span><span class="c n" style="left:414px">784</span><span class="c i" style="left:482px">CH8900784297078282001</span><span class="c n b" style="right:698.5px">0.00</span><span class="c" style="left:695.5px;letter-spacing:-0.52px">Bank - Konto</span><i class="rad"></i><i class="chk"></i><span class="c" style="left:938px">Thurgauer Kantonalbank Testbank</span><span class="sps"><span>SPS Einstellungen</span></span><span class="c i" style="left:1238px"></span></div>
<div class="row" style="top:483px"></div>
<div class="row" style="top:500px"></div>
<div class="row" style="top:517px"></div>
<div class="row" style="top:534px"></div>
<div class="row" style="top:551px"></div>
<div class="row" style="top:568px"></div>
<div class="row" style="top:585px"></div>
<div class="row" style="top:602px"></div>
  </div>
<div class="vl" style="left:147px"></div>
<div class="vl" style="left:212px"></div>
<div class="vl" style="left:280px"></div>
<div class="vl" style="left:410px"></div>
<div class="vl" style="left:478px"></div>
<div class="vl" style="left:623px"></div>
<div class="vl" style="left:691px"></div>
<div class="vl" style="left:786px"></div>
<div class="vl" style="left:854px"></div>
<div class="vl" style="left:934px"></div>
<div class="vl" style="left:1115px"></div>
<div class="vl" style="left:1235px"></div>
<div class="vl" style="left:1380px"></div>
  <div id="vsb"><i class="sa" style="top:6px;border-bottom:6px solid #a9a9a9"></i><i class="sa" style="bottom:5px;border-top:6px solid #a9a9a9"></i></div>
 </div></div>
 <div id="red"></div>

 <!-- status bar -->
 <div id="sb">
  <i class="ss" style="left:5px"></i>
  <svg style="left:20px;top:6px" width="13" height="13" viewBox="0 0 16 16"><rect x="1.500" y="1.500" width="13" height="13" rx="3.800" fill="url(#tg)"/><path d="M3.400 3.400h8v4.600H7.400v4.600H3.400z" fill="url(#th)" filter="url(#tb)"/></svg>
  <i class="arr" style="left:46px;top:11px"></i>
  <i class="ss" style="left:60px"></i>
  <svg style="left:67px;top:3px" width="14" height="17" viewBox="0 0 14 17"><path d="M3.500 8V5a3.500 3.500 0 0 1 7 0v3" fill="none" stroke="#9a9a9a" stroke-width="1.800"/><rect x="1.500" y="7.500" width="11" height="8" rx="1.200" fill="#f0b43a" stroke="#b27812"/><rect x="6.300" y="10" width="1.400" height="3.200" fill="#6b4708"/></svg>
  <div class="st" style="left:86px">Server : LIGHTNING</div>
  <i class="ss" style="left:211px"></i>
  <div class="st" style="left:226px;letter-spacing:-0.52px">Benutzer : WS_01_Std</div>
  <i class="ss" style="left:354px"></i>
  <svg style="left:361px;top:4px" width="15" height="16" viewBox="0 0 15 16"><path d="M7.500 1.500c-3 0-4.300 2.300-4.300 4.800 0 3-1.700 4.400-1.700 5.200h12c0-0.800-1.700-2.200-1.700-5.200 0-2.500-1.300-4.800-4.300-4.800z" fill="none" stroke="#000" stroke-width="1.100"/><path d="M5.800 13.200a1.800 1.800 0 0 0 3.400 0" fill="none" stroke="#000" stroke-width="1.100"/></svg>
  <div class="st" style="left:380px">38</div>
  <i class="ss" style="left:407px"></i>
  <div style="left:413px;top:5px;width:60px;height:13px;background:#e6e6e6;border:1px solid #bcbcbc"></div>
  <i class="ss" style="left:479px"></i>
  <div class="st" style="left:495px;letter-spacing:-0.25px">Anzahl Zeilen : 25</div>
  <i class="ss" style="left:604px"></i>
  <div class="st" style="right:18px;color:#0000ff;letter-spacing:-0.3px">Network Version 10.1, Build 10.1.5.1970 (x64)</div>
  <svg style="left:1683px;top:10px" width="13" height="13" viewBox="0 0 13 13"><g fill="#fff"><rect x="9" y="1" width="2" height="2"/><rect x="5" y="5" width="2" height="2"/><rect x="9" y="5" width="2" height="2"/><rect x="1" y="9" width="2" height="2"/><rect x="5" y="9" width="2" height="2"/><rect x="9" y="9" width="2" height="2"/></g><g fill="#9c9488"><rect x="8" y="0" width="2" height="2"/><rect x="4" y="4" width="2" height="2"/><rect x="8" y="4" width="2" height="2"/><rect x="0" y="8" width="2" height="2"/><rect x="4" y="8" width="2" height="2"/><rect x="8" y="8" width="2" height="2"/></g></svg>
 </div>
 <div id="frame"></div>
</div>
</body></html>
